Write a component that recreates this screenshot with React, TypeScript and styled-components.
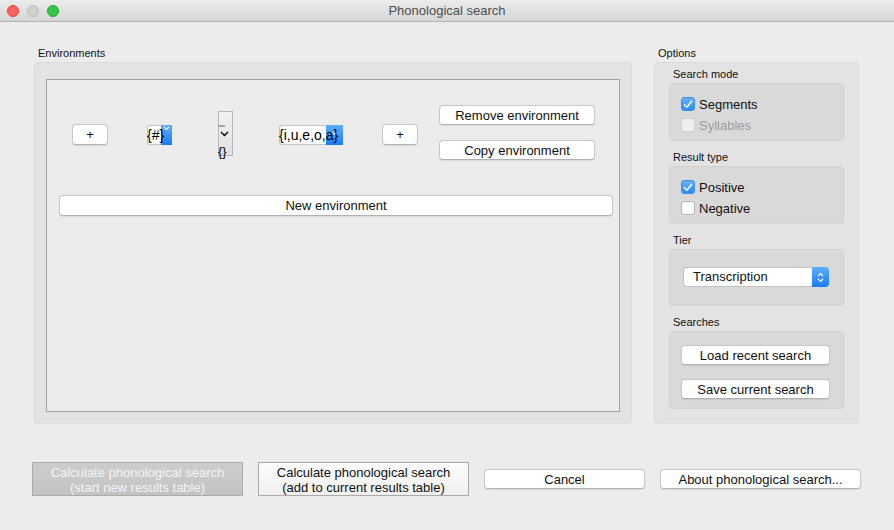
import styled, { createGlobalStyle } from "styled-components";

const GlobalStyle = createGlobalStyle`
  html, body {
    margin: 0;
    padding: 0;
    background: #ececec;
  }
  body {
    font-family: "Liberation Sans", Arial, sans-serif;
    color: #111;
  }
`;

const Window = styled.div`
  width: 894px;
  height: 530px;
  background: #ececec;
  display: flex;
  flex-direction: column;
  overflow: hidden;
`;

const TitleBar = styled.header`
  height: 22px;
  box-sizing: border-box;
  flex: none;
  display: grid;
  grid-template-columns: 1fr auto 1fr;
  align-items: center;
  padding: 0 7px;
  background: linear-gradient(#ececec, #d6d6d6);
  border-bottom: 1px solid #b2b2b2;
`;

const Lights = styled.div`
  display: flex;
  gap: 8px;
`;

const Light = styled.span<{ $fill: string; $ring: string }>`
  width: 12px;
  height: 12px;
  border-radius: 50%;
  box-sizing: border-box;
  background: ${(p) => p.$fill};
  border: 0.5px solid ${(p) => p.$ring};
`;

const WindowTitle = styled.div`
  font-size: 13px;
  color: #4d4d4d;
`;

const MainRow = styled.div`
  display: flex;
  gap: 22px;
  padding: 24px 35px 0 34px;
`;

const Section = styled.section<{ $width: number }>`
  width: ${(p) => p.$width}px;
  display: flex;
  flex-direction: column;
`;

const SectionLabel = styled.div`
  font-size: 11px;
  line-height: 14px;
  margin: 0 0 2px 4px;
  color: #111;
`;

const GroupBox = styled.div<{ $pad: string }>`
  height: 362px;
  box-sizing: border-box;
  background: #e3e3e3;
  border: 1px solid #dcdcdc;
  border-radius: 4px;
  padding: ${(p) => p.$pad};
  display: flex;
  flex-direction: column;
`;

const EnvList = styled.div`
  flex: 1;
  box-sizing: border-box;
  border: 1px solid #a2a2a2;
  background: #ececec;
  padding: 25px 6px 0 12px;
  display: flex;
  flex-direction: column;
`;

const EnvRow = styled.div`
  display: flex;
  align-items: center;
  height: 59px;
  padding-left: 13px;
`;

const Spacer = styled.span<{ $w: number }>`
  width: ${(p) => p.$w}px;
  flex: none;
`;

const PushButton = styled.button<{ $width?: number; $height?: number }>`
  width: ${(p) => (p.$width ? `${p.$width}px` : "auto")};
  height: ${(p) => p.$height ?? 20}px;
  flex: none;
  box-sizing: border-box;
  padding: 0;
  background: #ffffff;
  border: 1px solid #c8c8c8;
  border-bottom-color: #b2b2b2;
  border-radius: 4px;
  box-shadow: 0 0.5px 1px rgba(0, 0, 0, 0.08);
  font-family: inherit;
  font-size: 13px;
  line-height: 1;
  color: #111;
`;

const ButtonStack = styled.div`
  align-self: flex-start;
  display: flex;
  flex-direction: column;
  gap: 15px;
`;

const Combo = styled.div<{ $width: number; $arrow: number }>`
  width: ${(p) => p.$width}px;
  height: 20px;
  flex: none;
  box-sizing: border-box;
  display: grid;
  grid-template-columns: 1fr ${(p) => p.$arrow}px;
  background: #fff;
  border: 1px solid #c4c4c4;
  border-right: none;
  border-radius: 3px 0 0 3px;
`;

const ComboArrow = styled.span`
  grid-row: 1;
  grid-column: 2;
  margin: -1px 0;
  background: linear-gradient(#5eaefb, #1a7cf5);
  display: flex;
  justify-content: center;
`;

const ComboText = styled.span`
  grid-row: 1;
  grid-column: 1 / -1;
  z-index: 1;
  font-size: 14px;
  line-height: 18px;
  white-space: nowrap;
  margin-left: -1px;
  color: #000;
`;

const VSpin = styled.div`
  width: 15px;
  height: 45px;
  flex: none;
  margin-top: -2px;
  box-sizing: border-box;
  border: 1px solid #b6b6b6;
  background: linear-gradient(#f2f2f2, #e1e1e1);
  display: flex;
  flex-direction: column;
  align-items: flex-start;
  padding-top: 13px;

  & > * {
    flex: none;
  }
`;

const Dash = styled.span`
  width: 7px;
  height: 2px;
  margin-left: -1px;
  background: #a6a6a6;
`;

const SpinGlyph = styled.svg`
  margin: 4px 0 0 1px;
`;

const Braces = styled.span`
  font-size: 13px;
  line-height: 13px;
  margin: 8px 0 0 -1px;
  color: #000;
`;

const WideButton = styled(PushButton)`
  margin-top: 31px;
  height: 21px;
`;

const SubLabel = styled.div<{ $top?: number }>`
  font-size: 11px;
  line-height: 14px;
  margin: ${(p) => p.$top ?? 0}px 0 2px 4px;
  color: #111;
`;

const SubBox = styled.div<{ $height: number; $pad: string; $gap?: number }>`
  height: ${(p) => p.$height}px;
  box-sizing: border-box;
  background: #d9d9d9;
  border: 1px solid #d2d2d2;
  border-radius: 4px;
  padding: ${(p) => p.$pad};
  display: flex;
  flex-direction: column;
  align-items: flex-start;
  gap: ${(p) => p.$gap ?? 7}px;
`;

const CheckRow = styled.label<{ $disabled?: boolean }>`
  display: flex;
  align-items: center;
  gap: 4px;
  height: 14px;
  font-size: 13px;
  color: ${(p) => (p.$disabled ? "#9c9c9c" : "#111")};
`;

const CheckBox = styled.span<{ $checked?: boolean; $disabled?: boolean }>`
  width: 14px;
  height: 14px;
  box-sizing: border-box;
  border-radius: 3px;
  display: flex;
  align-items: center;
  justify-content: center;
  background: ${(p) =>
    p.$checked
      ? "linear-gradient(#65b1fb, #2c8df8)"
      : p.$disabled
        ? "#eeeeee"
        : "#ffffff"};
  border: 1px solid
    ${(p) => (p.$checked ? "#3a8ee6" : p.$disabled ? "#d2d2d2" : "#b4b4b4")};
`;

const TierSelect = styled.div`
  width: 146px;
  height: 20px;
  margin-left: 2px;
  box-sizing: border-box;
  display: flex;
  background: #fff;
  border: 1px solid #c2c2c2;
  border-right: none;
  border-radius: 4px;
  font-size: 13px;
`;

const TierText = styled.span`
  flex: 1;
  padding-left: 9px;
  line-height: 18px;
  color: #111;
`;

const TierArrow = styled.span`
  width: 17px;
  margin: -1px 0;
  border-radius: 0 4px 4px 0;
  background: linear-gradient(#5eaefb, #1a7cf5);
  display: flex;
  align-items: center;
  justify-content: center;
`;

const Footer = styled.footer`
  display: flex;
  align-items: center;
  gap: 15px;
  margin-top: 38px;
  padding-left: 32px;
`;

const BigButton = styled.button<{ $disabled?: boolean }>`
  width: 211px;
  height: 34px;
  box-sizing: border-box;
  padding: 1px 0 0;
  font-family: inherit;
  font-size: 13px;
  line-height: 15px;
  border: 1px solid ${(p) => (p.$disabled ? "#ababab" : "#a9a9a9")};
  border-radius: 0;
  color: ${(p) => (p.$disabled ? "#f4f4f4" : "#111")};
  background: ${(p) =>
    p.$disabled
      ? "linear-gradient(#cdcdcd, #c3c3c3)"
      : "linear-gradient(#fdfdfd, #efefef)"};
`;

const Check = () => (
  <svg width="10" height="9" viewBox="0 0 10 9">
    <path
      d="M1.5 4.8 L3.9 7.3 L8.6 1.3"
      fill="none"
      stroke="#fff"
      strokeWidth="1.5"
      strokeLinecap="round"
      strokeLinejoin="round"
    />
  </svg>
);

const DownChevron = ({ top }: { top: number }) => (
  <svg width="7" height="5" viewBox="0 0 7 5" style={{ marginTop: top }}>
    <path d="M1 1 L3.5 3.5 L6 1" fill="none" stroke="#fff" strokeWidth="1.1" />
  </svg>
);

export default function App() {
  return (
    <Window>
      <GlobalStyle />
      <TitleBar>
        <Lights>
          <Light $fill="#fc605c" $ring="#e0443e" />
          <Light $fill="#d0d0d0" $ring="#bdbdbd" />
          <Light $fill="#34c84a" $ring="#1aab29" />
        </Lights>
        <WindowTitle>Phonological search</WindowTitle>
      </TitleBar>

      <MainRow>
        <Section $width={598}>
          <SectionLabel>Environments</SectionLabel>
          <GroupBox $pad="16px 11px 11px">
            <EnvList>
              <EnvRow>
                <PushButton $width={36} $height={21}>
                  +
                </PushButton>
                <Spacer $w={39} />
                <Combo $width={25} $arrow={11}>
                  <ComboArrow>
                    <DownChevron top={1} />
                  </ComboArrow>
                  <ComboText>{"{#}"}</ComboText>
                </Combo>
                <Spacer $w={46} />
                <VSpin>
                  <Dash />
                  <SpinGlyph width="9" height="6" viewBox="0 0 9 6">
                    <path
                      d="M1 1 L4.5 4.5 L8 1"
                      fill="none"
                      stroke="#000"
                      strokeWidth="1.4"
                    />
                  </SpinGlyph>
                  <Braces>{"{}"}</Braces>
                </VSpin>
                <Spacer $w={46} />
                <Combo $width={64} $arrow={17}>
                  <ComboArrow>
                    <DownChevron top={6} />
                  </ComboArrow>
                  <ComboText>{"{i,u,e,o,a}"}</ComboText>
                </Combo>
                <Spacer $w={39} />
                <PushButton $width={36} $height={21}>
                  +
                </PushButton>
                <Spacer $w={21} />
                <ButtonStack>
                  <PushButton $width={156}>Remove environment</PushButton>
                  <PushButton $width={156}>Copy environment</PushButton>
                </ButtonStack>
              </EnvRow>
              <WideButton>New environment</WideButton>
            </EnvList>
          </GroupBox>
        </Section>

        <Section $width={205}>
          <SectionLabel>Options</SectionLabel>
          <GroupBox $pad="4px 14px 14px">
            <SubLabel>Search mode</SubLabel>
            <SubBox $height={58} $pad="13px 11px 0">
              <CheckRow>
                <CheckBox $checked>
                  <Check />
                </CheckBox>
                Segments
              </CheckRow>
              <CheckRow $disabled>
                <CheckBox $disabled />
                Syllables
              </CheckRow>
            </SubBox>

            <SubLabel $top={9}>Result type</SubLabel>
            <SubBox $height={58} $pad="13px 11px 0">
              <CheckRow>
                <CheckBox $checked>
                  <Check />
                </CheckBox>
                Positive
              </CheckRow>
              <CheckRow>
                <CheckBox />
                Negative
              </CheckRow>
            </SubBox>

            <SubLabel $top={9}>Tier</SubLabel>
            <SubBox $height={57} $pad="17px 11px 0">
              <TierSelect>
                <TierText>Transcription</TierText>
                <TierArrow>
                  <svg width="7" height="11" viewBox="0 0 7 11">
                    <path
                      d="M1 4 L3.5 1.5 L6 4 M1 7 L3.5 9.5 L6 7"
                      fill="none"
                      stroke="#fff"
                      strokeWidth="1.1"
                    />
                  </svg>
                </TierArrow>
              </TierSelect>
            </SubBox>

            <SubLabel $top={9}>Searches</SubLabel>
            <SubBox $height={78} $pad="13px 11px 0" $gap={14}>
              <PushButton $width={149}>Load recent search</PushButton>
              <PushButton $width={149}>Save current search</PushButton>
            </SubBox>
          </GroupBox>
        </Section>
      </MainRow>

      <Footer>
        <BigButton $disabled>
          Calculate phonological search
          <br />
          (start new results table)
        </BigButton>
        <BigButton>
          Calculate phonological search
          <br />
          (add to current results table)
        </BigButton>
        <PushButton $width={161}>Cancel</PushButton>
        <PushButton $width={201}>About phonological search...</PushButton>
      </Footer>
    </Window>
  );
}
